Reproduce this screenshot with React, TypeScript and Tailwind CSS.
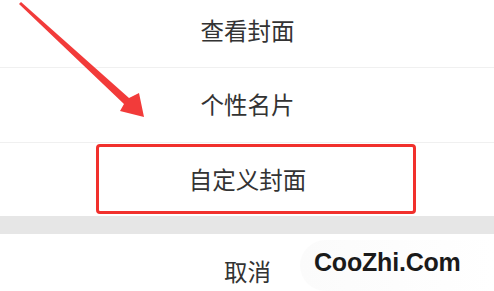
export default function App() {
    return (
        <div className="relative h-[291px] w-[494px] overflow-hidden bg-white font-['Noto_Sans_CJK_SC',sans-serif] text-[23.5px] text-[#333333]">
            <div className="flex h-[67px] items-center justify-center pb-[5px] pl-[1px]">查看封面</div>
            <div className="flex h-[75px] items-center justify-center border-t border-[#f0f0f0] pl-[1px]">个性名片</div>
            <div className="flex h-[74px] items-center justify-center border-t border-[#f0f0f0] pl-[1px]">自定义封面</div>
            <div className="h-[18px] bg-[#e6e6e6]" />
            <div className="flex h-[76px] items-center justify-center pl-[1px]">取消</div>

            {/* annotation box */}
            <div className="absolute left-[96px] top-[144px] h-[70px] w-[320px] rounded-[4px] border-[3px] border-[#f1302c]" />

            {/* arrow */}
            <svg className="absolute left-0 top-0" width="160" height="130" viewBox="0 0 160 130" fill="none" aria-hidden="true">
                <polygon
                    points="19,4 21,2 129,98 139,93 144,117 120,111 124,104"
                    fill="#f23b3a"
                />
            </svg>

            {/* watermark */}
            <div className="absolute left-[300px] top-[240px] h-[51px] w-[194px] rounded-l-[30px] bg-gradient-to-r from-[#fbfbfb] to-white" />
            <div className="absolute left-[314px] top-[246px] font-['Liberation_Sans',Arial,sans-serif] text-[25px] font-bold leading-[32px] tracking-[-0.2px] text-[#1a1a1a]">
                CooZhi.Com
            </div>
        </div>
    );
}
